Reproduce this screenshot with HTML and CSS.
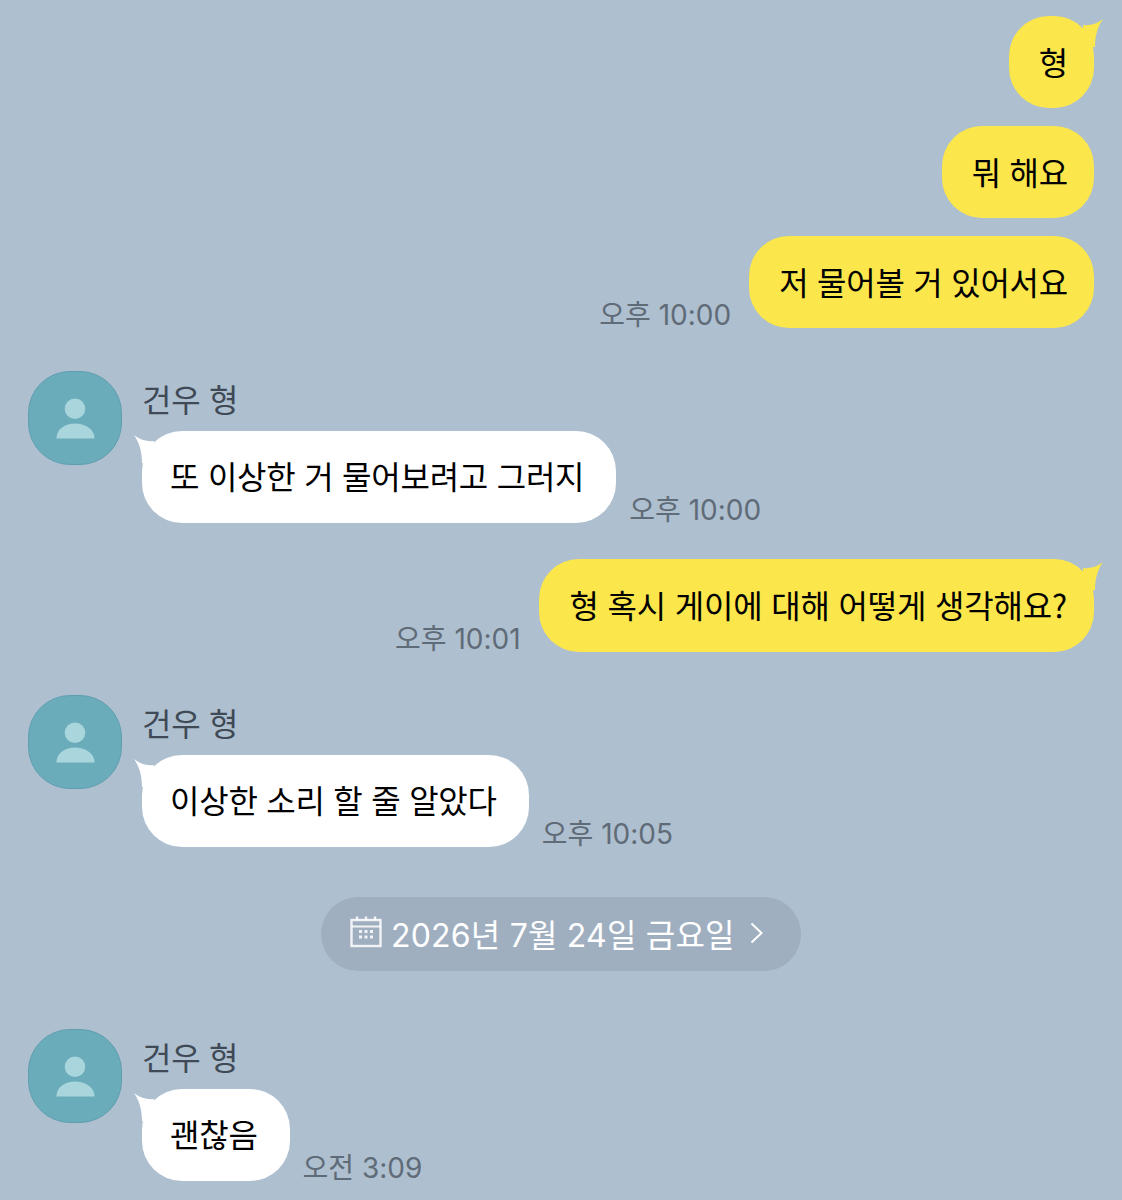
FILE: index.html
```html
<!DOCTYPE html>
<html lang="ko">
<head>
    <meta charset="UTF-8">
    <meta name="viewport" content="width=device-width, initial-scale=1.0">
    <title>건우 형</title>
    <link rel="stylesheet" href="styles.css">
</head>
<body>
    <svg class="defs" width="0" height="0">
        <symbol id="person" viewBox="0 0 94 94">
            <circle cx="47" cy="37.5" r="10.5"/>
            <path d="M28 68 C28 58 37 52.5 47 52.5 C57 52.5 67 58 67 68 Z"/>
        </symbol>
        <symbol id="tail-r" viewBox="0 0 20 30">
            <path d="M0 8 C6 9 14 7 20 2 C15 9 12 18 12 30 L0 30 Z"/>
        </symbol>
        <symbol id="tail-l" viewBox="0 0 20 30">
            <path d="M20 8 C14 9 6 7 0 2 C5 9 8 18 8 30 L20 30 Z"/>
        </symbol>
    </svg>

    <div class="chat">
        <div class="row me first">
            <div class="bubble yellow">
                <svg class="tail tail-me"><use href="#tail-r"/></svg>
                형
            </div>
        </div>
        <div class="row me">
            <div class="bubble yellow">뭐 해요</div>
        </div>
        <div class="row me">
            <span class="time">오후 10:00</span>
            <div class="bubble yellow">저 물어볼 거 있어서요</div>
        </div>

        <div class="row other gap-43">
            <svg class="avatar"><use href="#person"/></svg>
            <div class="col">
                <div class="name">건우 형</div>
                <div class="line">
                    <div class="bubble white">
                        <svg class="tail tail-other"><use href="#tail-l"/></svg>
                        또 이상한 거 물어보려고 그러지
                    </div>
                    <span class="time">오후 10:00</span>
                </div>
            </div>
        </div>

        <div class="row me gap-36">
            <span class="time">오후 10:01</span>
            <div class="bubble yellow tall">
                <svg class="tail tail-me"><use href="#tail-r"/></svg>
                형 혹시 게이에 대해 어떻게 생각해요?
            </div>
        </div>

        <div class="row other gap-43">
            <svg class="avatar"><use href="#person"/></svg>
            <div class="col">
                <div class="name">건우 형</div>
                <div class="line">
                    <div class="bubble white">
                        <svg class="tail tail-other"><use href="#tail-l"/></svg>
                        이상한 소리 할 줄 알았다
                    </div>
                    <span class="time">오후 10:05</span>
                </div>
            </div>
        </div>

        <div class="date-row">
            <div class="date-pill">
                <svg class="cal" viewBox="0 0 32 32" fill="none" stroke="#fff" stroke-opacity="0.85">
                    <rect x="1.5" y="4" width="29" height="26" stroke-width="2.4"/>
                    <path d="M1.5 10.5 H30.5" stroke-width="2"/>
                    <path d="M7 0.5 V4 M16 0.5 V4 M25 0.5 V4" stroke-width="2.4"/>
                    <path d="M9 15.5 h3 M14.5 15.5 h3 M20 15.5 h3 M9 21 h3 M14.5 21 h3 M20 21 h3" stroke-width="3"/>
                </svg>
                <span class="date-text">2026년 7월 24일 금요일</span>
                <svg class="chev" viewBox="0 0 13 22" fill="none" stroke="#fff" stroke-width="2"><path d="M1.5 1.5 L11.5 11 L1.5 20.5"/></svg>
            </div>
        </div>

        <div class="row other gap-58">
            <svg class="avatar"><use href="#person"/></svg>
            <div class="col">
                <div class="name">건우 형</div>
                <div class="line">
                    <div class="bubble white">
                        <svg class="tail tail-other"><use href="#tail-l"/></svg>
                        괜찮음
                    </div>
                    <span class="time">오전 3:09</span>
                </div>
            </div>
        </div>
    </div>
</body>
</html>
```

FILE: styles.css
```css
html, body { margin: 0; padding: 0; }
body { background: #aebfcf; font-family: "Noto Sans CJK KR", "Noto Sans", sans-serif; height: 1200px; overflow: hidden; }
.defs { position: absolute; }
.chat { padding: 16px 28px 0; }

.row { display: flex; margin-top: 18px; }
.row.first { margin-top: 0; }
.row.me { justify-content: flex-end; align-items: flex-end; }
.row.other { align-items: flex-start; }
.gap-36 { margin-top: 36px; }
.gap-43 { margin-top: 43px; }
.gap-58 { margin-top: 58px; }

.bubble { position: relative; height: 92px; font-size: 32px; letter-spacing: -0.25px; color: #000; border-radius: 40px; white-space: nowrap; box-sizing: border-box; }
.yellow { background: #fbe64b; line-height: 90px; padding: 0 26px 0 30px; }
.white { background: #fff; line-height: 88px; padding: 0 32px 0 28px; }
.bubble.tall { height: 93px; line-height: 91px; letter-spacing: -0.2px; padding: 0 27px 0 31px; }

.tail { position: absolute; top: 2px; width: 20px; height: 30px; }
.tail-me { top: 1px; right: -9px; fill: #fbe64b; }
.tail-other { left: -8px; fill: #fff; }

.time { font-family: Inter, "Noto Sans CJK KR", sans-serif; font-size: 28px; line-height: 34px; color: #606b78; white-space: nowrap; }
.row.me .time { margin-right: 18px; margin-bottom: -4px; }
.line .time { margin-left: 13px; margin-bottom: -4px; }

.avatar { width: 94px; height: 94px; flex: none; box-sizing: border-box; background: #6aacba; border: 1px solid #5f9fb0; border-radius: 42px; fill: #a9d5dc; }
.col { margin-left: 20px; }
.name { height: 60px; line-height: 55px; font-size: 32px; letter-spacing: -0.25px; color: #3f4a56; }
.line { display: flex; align-items: flex-end; }

.date-row { display: flex; justify-content: center; margin-top: 50px; }
.date-pill { display: flex; align-items: center; width: 480px; height: 74px; box-sizing: border-box; padding-left: 29px; background: #a0afbf; border-radius: 37px; }
.cal { width: 32px; height: 32px; flex: none; margin-top: -4px; }
.date-text { margin: -2px 0 0 9px; font-family: Inter, "Noto Sans CJK KR", sans-serif; font-size: 32px; letter-spacing: 0.2px; color: #fff; white-space: nowrap; }
.chev { width: 13px; height: 22px; flex: none; margin-left: 15px; margin-top: -2px; }
```
